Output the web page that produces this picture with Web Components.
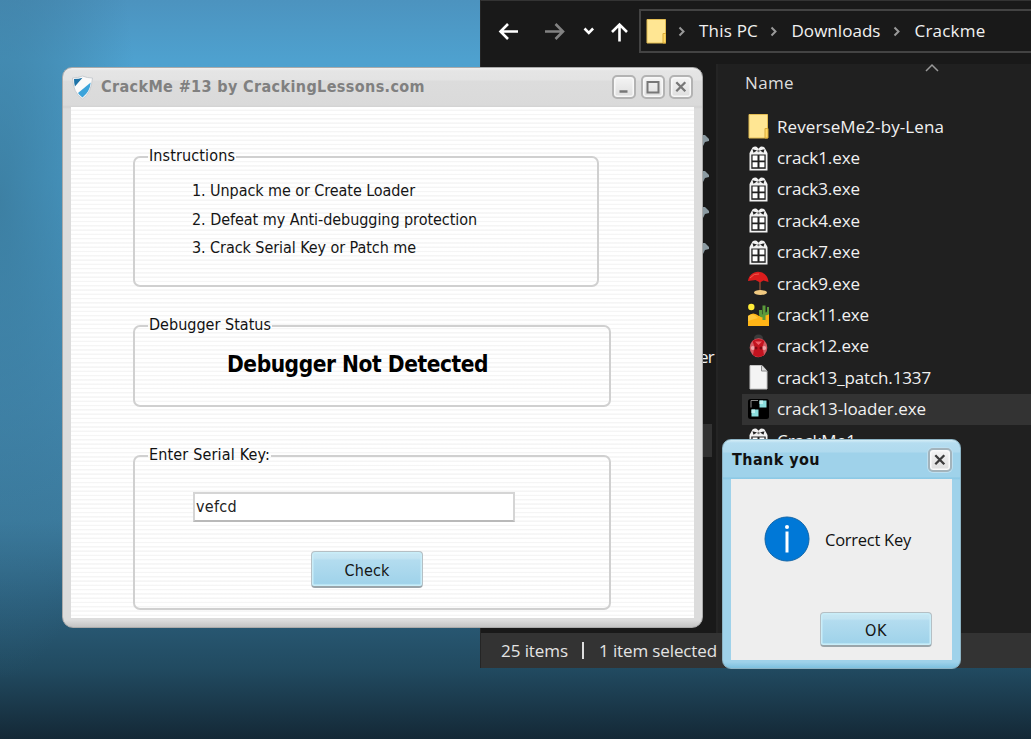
<!DOCTYPE html>
<html lang="en">
<head>
<meta charset="utf-8">
<title>Desktop</title>
<style>
html,body{margin:0;height:100%;overflow:hidden}
body{font-family:"DejaVu Sans Condensed","DejaVu Sans",sans-serif}
</style>
</head>
<body>
<desk-top></desk-top>
<script>
const define=(name,html,ready)=>customElements.define(name,class extends HTMLElement{
  connectedCallback(){
    if(this.shadowRoot)return;
    this.attachShadow({mode:"open"}).innerHTML=html;
    if(ready)ready.call(this,this.shadowRoot);
  }
});

/* One line of text, tracked so that it fills the width given in "w". */
define("fit-text",`<style>
:host{display:inline-block;white-space:pre;line-height:20px;height:20px}
span{display:inline-block}
:host([face=segoe]){font-family:"Open Sans","Noto Sans",sans-serif}
</style><span><slot></slot></span>`,function(r){
  const w=+this.getAttribute("w"),s=r.querySelector("span");
  if(this.hasAttribute("size"))this.style.fontSize=this.getAttribute("size")+"px";
  this.style.width=w+"px";
  s.style.letterSpacing=(w-s.getBoundingClientRect().width)/this.textContent.length+"px";
});

const ICONS={
folder:`<path d="M1 .5h18.500v23.500H1z" fill="#ffe693" stroke="#e3bd53"/><path d="M17 14.500h3v9.500h-3z" fill="#ffd968" stroke="#dbac39"/>`,
gift:`<path d="M1.500 24.500V7L4.500 1.500q3-2 6 .5 3-2.500 6-.5L19.500 7v17.500z" fill="#f2f2f2"/><path d="M3.300 8.500h14.400V22.800H3.300z" fill="#222"/><path d="M4.600 9.500h4.900v4.900H4.600zM11.500 9.500h4.900v4.900h-4.900zM4.600 16.200h4.900v5H4.600zM11.500 16.200h4.900v5h-4.900z" fill="#fff"/><path d="M4.500 3.200l4.500 1.300-3.500 2.300zM16.500 3.200L12 4.500l3.500 2.300zM8.300 0h4.400l-2.200 2.700z" fill="#222"/><circle cx="10.500" cy="5" r="1.200" fill="#777"/>`,
umbrella:`<path d="M12 9v12" stroke="#7b4632" stroke-width="1.600"/><path d="M0 10C1 4 5 1 10 .8 16 1 20 5 20.500 11L15.500 9.500 12 11.500 7.500 9z" fill="#dc1d1d"/><path d="M2 7q4-5 9-4" stroke="#f65a4c" fill="none"/><ellipse cx="12.500" cy="21.500" rx="6.500" ry="2.400" fill="#f0c981"/>`,
cactus:`<circle cx="3.300" cy="4" r="3.200" fill="#ffec38"/><path d="M0 13q5-5 11 0l10-2v12H0z" fill="#ffb516"/><path d="M0 13q5-4 10 2L0 18z" fill="#ffc83b"/><path d="M16 17V2.500M12.500 7v4q0 2 3 2M20.500 4v4q0 3-3.500 3" fill="none" stroke="#5a9a3b" stroke-width="3"/>`,
bug:`<path d="M6 5q0-4.500 4.500-4.500T15 5z" fill="#3b3b3b"/><ellipse cx="10.500" cy="13.700" rx="8.800" ry="9.500" fill="#d45a62"/><path d="M4.500 7q6-4 12 0l-2 6 1.500 8q-5.500 4-11 0l1.500-8z" fill="#c3131f"/><circle cx="4.800" cy="14" r="2" fill="#f0a5a9"/><circle cx="16.200" cy="14" r="2" fill="#f0a5a9"/><circle cx="8" cy="14" r="1.500" fill="#7e0912"/><circle cx="13" cy="14" r="1.500" fill="#7e0912"/><path d="M7 7.500h7l-3.500 3.500z" fill="#ef6068"/>`,
page:`<path d="M2 .5h12l5 5.500V24H2z" fill="#f4f4f4" stroke="#c4c4c4"/><path d="M13.500 .5V6H19" fill="#ddd" stroke="#888"/>`,
loader:`<rect y="2" width="21" height="20" rx="2.500" fill="#000"/><path d="M11.500 3.500h7v7h-7zM3.500 12.500h7v7h-7z" fill="#8bdede"/><path d="M11.500 3.500h3.500v3.500h-3.500zM3.500 12.500H7V16H3.500z" fill="#c0f0ef"/><path d="M3 10.500V3.500h7" stroke="#8a8a8a" fill="none"/>`
};
define("file-row",`<style>
:host{display:flex;align-items:center;height:31.4px;padding-left:6px;gap:8px;color:#f1f1f1;font-size:17px}
:host([selected]){background:#333}
svg{flex:none}
</style><svg width="21" height="25" viewBox="0 0 21 25"></svg><slot></slot>`,function(r){
  r.querySelector("svg").innerHTML=ICONS[this.getAttribute("icon")];
});

define("explorer-window",`<style>
:host{display:flex;flex-direction:column;background:#191919;color:#f1f1f1;box-sizing:border-box;border-top:1px solid #333;border-left:1px solid #252525;overflow:hidden}
nav{height:63px;display:flex;align-items:flex-start;flex:none}
.arrows{width:158px;height:62px;flex:none}
.addr{margin-top:8px;height:44px;flex:1;border:2px solid #434343;border-right:0;box-sizing:border-box;display:flex;align-items:center;padding-left:5px}
.addr svg{flex:none}
main{flex:1;display:flex;min-height:0}
aside{width:235px;border-right:2px solid #242424;display:flex;flex-direction:column;align-items:flex-end;flex:none}
.pins{display:flex;flex-direction:column;gap:23px;padding:71px 7px 0 0}
.pins svg{display:block}
.net{margin:91px 2px 0 0}
.hl{margin-top:57px;width:100px;height:33px;background:#323232;margin-right:4px}
section{flex:1;background:#202020;padding-left:24px;display:flex;flex-direction:column}
header{height:47px;display:flex;padding:9px 0 0 3px;box-sizing:border-box;flex:none;gap:131px;color:#dedede}
header svg{margin-top:-10px}
footer{height:35px;background:#333;display:flex;align-items:center;padding-left:20px;flex:none;color:#e4e4e4}
footer i{width:2px;height:17px;background:#ddd;margin:0 15px 0 14px}
</style>
<nav><svg class="arrows" viewBox="0 0 158 62" fill="none" stroke-width="2.600">
<path d="M19.500 30.500H37M27 23l-7.500 7.500L27 38" stroke="#fff"/><path d="M64 30.500h18M74.500 23l7.500 7.500-7.500 7.500" stroke="#828282"/><path d="M103.500 27.500l4.300 4.300 4.300-4.300" stroke="#fff"/><path d="M138.500 40.500V24M131 31l7.500-7.500L146 31" stroke="#fff"/></svg>
<div class="addr"><svg width="20" height="25" viewBox="0 0 20 25">${ICONS.folder}</svg>
<svg width="33" height="14" fill="none" stroke="#999" stroke-width="2"><path d="M13.500 3.500l4 4-4 4"/></svg><fit-text face="segoe" size="17" w="59">This PC</fit-text>
<svg width="33.500" height="14" fill="none" stroke="#999" stroke-width="2"><path d="M13.500 3.500l4 4-4 4"/></svg><fit-text face="segoe" size="17" w="89">Downloads</fit-text>
<svg width="34" height="14" fill="none" stroke="#999" stroke-width="2"><path d="M13.500 3.500l4 4-4 4"/></svg><fit-text face="segoe" size="17" w="71">Crackme</fit-text></div></nav>
<main><aside><div class="pins"></div><fit-text class="net" face="segoe" size="17" w="15">er</fit-text><div class="hl"></div></aside>
<section><header><fit-text face="segoe" size="17" w="49">Name</fit-text><svg width="14" height="9" fill="none" stroke="#999" stroke-width="1.500"><path d="M1 8l6-6 6 6"/></svg></header>
<file-row icon="folder"><fit-text face="segoe" w="167">ReverseMe2-by-Lena</fit-text></file-row>
<file-row icon="gift"><fit-text face="segoe" w="83">crack1.exe</fit-text></file-row>
<file-row icon="gift"><fit-text face="segoe" w="83">crack3.exe</fit-text></file-row>
<file-row icon="gift"><fit-text face="segoe" w="83">crack4.exe</fit-text></file-row>
<file-row icon="gift"><fit-text face="segoe" w="83">crack7.exe</fit-text></file-row>
<file-row icon="umbrella"><fit-text face="segoe" w="83">crack9.exe</fit-text></file-row>
<file-row icon="cactus"><fit-text face="segoe" w="92">crack11.exe</fit-text></file-row>
<file-row icon="bug"><fit-text face="segoe" w="92">crack12.exe</fit-text></file-row>
<file-row icon="page"><fit-text face="segoe" w="154">crack13_patch.1337</fit-text></file-row>
<file-row icon="loader" selected><fit-text face="segoe" w="149">crack13-loader.exe</fit-text></file-row>
<file-row icon="gift"><fit-text face="segoe" w="79">CrackMe1</fit-text></file-row>
</section></main>
<footer><fit-text face="segoe" size="17" w="67">25 items</fit-text><i></i><fit-text face="segoe" size="17" w="118">1 item selected</fit-text></footer>`,function(r){
  r.querySelector(".pins").innerHTML='<svg width="12" height="13" viewBox="0 0 12 13"><path d="M0 0h8l4 4v2l-4 1-3 6H0z" fill="#8c9ba2"/></svg>'.repeat(4);
});

define("caption-button",`<style>
:host{display:block;width:24px;height:24px;box-sizing:border-box;border:2px solid #b3b3b3;border-radius:5px;background:linear-gradient(#f4f4f4,#dedede);box-shadow:inset 0 0 0 1.500px #f8f8f8;color:#777}
:host([dark]){color:#3c3c3c;border-color:#a3b3bb;box-shadow:inset 0 0 0 1.500px #fafafa,0 0 0 1px #bddff0}
svg{display:block;margin:-1px}
</style><svg width="22" height="22" viewBox="0 0 22 22" fill="none" stroke="currentColor" stroke-width="2.300"></svg>`,function(r){
  r.querySelector("svg").innerHTML={min:'<path d="M6.500 15.500h8"/>',max:'<path d="M5.500 6h11v10.500h-11z" stroke-width="2"/>',close:'<path d="M6.300 6.300l9 9M15.300 6.300l-9 9"/>'}[this.getAttribute("kind")];
});

define("group-box",`<style>
:host{display:block;position:relative;box-sizing:border-box;border:2px solid #d0d0d0;border-radius:7px}
.t{position:absolute;left:13px;top:-12px;font-size:16px;line-height:20px;height:20px;color:#111;background:linear-gradient(#fbfbfb,#fbfbfb) 0 10px/100% 2px no-repeat;padding:0 1px}
</style><div class="t"><slot name="title"></slot></div><slot></slot>`);

define("push-button",`<style>
:host{display:flex;align-items:center;justify-content:center;box-sizing:border-box;border:1.500px solid #b5bfc4;border-bottom:2px solid #9aa5aa;border-radius:4px;background:linear-gradient(#c8e7f4 0,#c2e4f2 18%,#b3dcef 24%,#a0d3ea 92%,#b3e3f3 100%);box-shadow:inset 0 0 0 1.500px #c9edf8;color:#151515;padding-top:3px}
</style><slot></slot>`);

define("crackme-window",`<style>
:host{display:flex;flex-direction:column;box-sizing:border-box;border:1px solid #aaa;border-radius:10px 10px 11px 11px;background:linear-gradient(#f0f0f0 0,#e5e5e5 3px,#e3e3e3 12px,#dcdcdc 13px,#dadada 37px,#d2d2d2 39px,#dcdcdc 41px,#dcdcdc 552px,#c4c4c4);padding:0 8px 9px;overflow:hidden}
header{height:38px;margin-bottom:1px;display:flex;align-items:center;color:#808080;font-weight:bold;flex:none}
header>svg{margin:0 7px 0 0;flex:none}
.b{margin-left:auto;margin-right:1px;display:flex;gap:4.500px}
main{flex:1;background:repeating-linear-gradient(#fff 0 2.200px,#f5f5f5 2.900px 3.700px,#fff 4.280px);padding:49px 0 0 62px;display:flex;flex-direction:column;box-sizing:border-box;color:#151515}
.g1{width:466px;height:131px;padding:23px 0 0 57px}
.g1 fit-text{display:block;margin-bottom:8.500px}
.g2{width:478px;height:82px;margin-top:38px;padding:27px 0 0 92px;color:#000;font-weight:bold}
.g3{width:478px;height:155px;margin-top:48px;padding:35px 0 0 58px}
.in{width:322px;height:30px;box-sizing:border-box;border:2px solid #d5d5d5;border-bottom:2px solid #b9b9b9;background:#fff;padding:3px 0 0 1px;color:#222}
push-button{width:112px;height:37px;margin:29px 0 0 118px}
</style>
<header><svg width="23" height="25" viewBox="0 0 23 25"><path d="M1.500 3Q7 3 11.500 1q4.500 2 10 2-1 15-10 21Q2 18 1.500 3z" fill="#fafafa" stroke="#c8ccd0"/><path d="M3 4q5 0 8.500-1.200L3.900 11.500Q3 8 3 4z" fill="#1e73a7"/><path d="M19.700 7.500Q19 16.500 11.500 22.500q-3-2-4.500-4.500z" fill="#3ba3da"/></svg>
<fit-text size="16" w="324">CrackMe #13 by CrackingLessons.com</fit-text>
<div class="b"><caption-button kind="min"></caption-button><caption-button kind="max"></caption-button><caption-button kind="close"></caption-button></div></header>
<main>
<group-box class="g1"><fit-text slot="title" w="86">Instructions</fit-text><fit-text size="16" w="223">1. Unpack me or Create Loader</fit-text><fit-text size="16" w="285">2. Defeat my Anti-debugging protection</fit-text><fit-text size="16" w="224">3. Crack Serial Key or Patch me</fit-text></group-box>
<group-box class="g2"><fit-text slot="title" w="122" style="font-weight:normal">Debugger Status</fit-text><fit-text size="22.500" w="261">Debugger Not Detected</fit-text></group-box>
<group-box class="g3"><fit-text slot="title" w="121">Enter Serial Key:</fit-text><div class="in"><fit-text size="16" w="41">vefcd</fit-text></div><push-button><fit-text size="16" w="45">Check</fit-text></push-button></group-box>
</main>`);

define("message-dialog",`<style>
:host{display:flex;flex-direction:column;box-sizing:border-box;border:1px solid #8db4c5;border-radius:9px;background:linear-gradient(#d4edf7 0,#b5ddf0 3px,#b0daee 12px,#9fd2ea 13px,#9fd2ea 37px,#88c7e4 38px,#9fd2ea 40px,#9fd2ea 222px,#7cc0df);padding:0 8px 8px}
header{height:39px;display:flex;align-items:center;justify-content:space-between;font-weight:bold;color:#111;flex:none}
header fit-text{margin-left:1px}
main{flex:1;background:#eee;box-sizing:border-box;padding:37px 20px 0 33px;display:flex;flex-direction:column}
.m{display:flex;align-items:center;gap:15px;color:#111}
.m svg{flex:none}
.m fit-text{margin-top:2px}
push-button{width:112px;height:35px;margin:50px 0 0 auto}
</style>
<header><fit-text size="16" w="88">Thank you</fit-text><caption-button dark kind="close"></caption-button></header>
<main><div class="m"><svg width="46" height="46" viewBox="0 0 46 46"><circle cx="23" cy="23" r="22" fill="#0078d7" stroke="#1165a8"/><path d="M23 15.500v21" stroke="#fff" stroke-width="3"/><circle cx="23" cy="11" r="2" fill="#fff"/></svg><fit-text face="segoe" size="16.500" w="86">Correct Key</fit-text></div>
<push-button><fit-text size="16" w="22">OK</fit-text></push-button></main>`);

define("desk-top",`<style>
:host{display:block;position:relative;width:1031px;height:739px;overflow:hidden;background:radial-gradient(ellipse 140px 480px at 0 200px,#387595bb,#38759500),linear-gradient(#4c93bf 0,#4ea1cf 60px,#4ba0ce 180px,#4389b1 400px,#3c7b9e 520px,#2c5f7c 600px,#214a60 670px,#142836 739px)}
explorer-window,crackme-window,message-dialog{position:absolute}
explorer-window{left:480px;top:0;width:551px;height:668px}
crackme-window{left:62px;top:67px;width:641px;height:561px}
message-dialog{left:722px;top:439px;width:239px;height:230px}
</style><explorer-window></explorer-window><crackme-window></crackme-window><message-dialog></message-dialog>`);
</script>
</body>
</html>
